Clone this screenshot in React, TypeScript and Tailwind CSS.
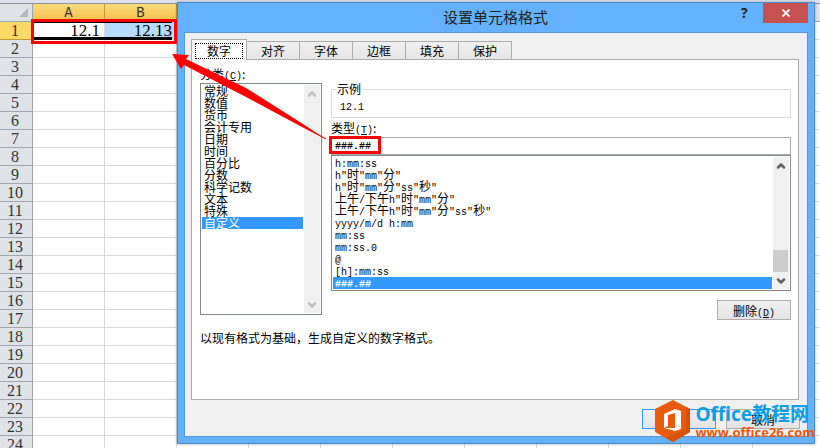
import { Fragment } from "react";
import { ChevronDown, ChevronUp } from "lucide-react";
import clsx from "clsx";

const COLUMNS = ["A", "B", "C", "D", "E", "F", "G", "H", "I", "J", "K"];
const ROWS = Array.from({ length: 24 }, (_, i) => i + 1);
const VALUES: Record<string, string> = { A1: "12.1", B1: "12.13" };

const TABS = ["数字", "对齐", "字体", "边框", "填充", "保护"];

const CATEGORIES = [
  "常规",
  "数值",
  "货币",
  "会计专用",
  "日期",
  "时间",
  "百分比",
  "分数",
  "科学记数",
  "文本",
  "特殊",
  "自定义",
];

const FORMATS = [
  "h:mm:ss",
  'h"时"mm"分"',
  'h"时"mm"分"ss"秒"',
  '上午/下午h"时"mm"分"',
  '上午/下午h"时"mm"分"ss"秒"',
  "yyyy/m/d h:mm",
  "mm:ss",
  "mm:ss.0",
  "@",
  "[h]:mm:ss",
  "###.##",
];

// Latin runs are half the width of a Chinese character
function MixedText({ text }: { text: string }) {
  return (
    <>
      {text.split(/([\x20-\x7e]+)/).map((part, i) =>
        i % 2 === 1 ? (
          <span key={i} className="font-['Liberation_Mono',monospace] text-[10px]">
            {part}
          </span>
        ) : (
          <Fragment key={i}>{part}</Fragment>
        )
      )}
    </>
  );
}

function AccessKey({ letter }: { letter: string }) {
  return (
    <span className="font-['Liberation_Mono',monospace] text-[10px]">
      (<u>{letter}</u>)
    </span>
  );
}

function Sheet() {
  return (
    <table className="w-[825px] table-fixed border-separate border-spacing-0 border-t border-[#8f9299] bg-white text-[#333]">
      <colgroup>
        <col className="w-[33px]" />
        {COLUMNS.map((c) => (
          <col key={c} className="w-[72px]" />
        ))}
      </colgroup>
      <thead>
        <tr className="h-[18px]">
          <th className="border-r border-b border-[#9ea6b0] bg-[#dfe3e8] p-0">
            <svg viewBox="0 0 9 9" className="mr-1 ml-auto block size-[9px]">
              <path d="M9 0V9H0Z" fill="#b4b9c0" />
            </svg>
          </th>
          {COLUMNS.map((c, i) => (
            <th
              key={c}
              className={clsx(
                "border-r border-b p-0 pt-0.5 font-['Liberation_Mono',monospace] text-sm leading-[15px] font-normal",
                i < 2
                  ? "border-[#c29a3c] bg-linear-to-b from-[#fada7c] to-[#f2bf48]"
                  : "border-[#9ea6b0] bg-[#dfe3e8]"
              )}
            >
              {c}
            </th>
          ))}
        </tr>
      </thead>
      <tbody>
        {ROWS.map((r) => (
          <tr key={r} className="h-[18px]">
            <th
              className={clsx(
                "border-r border-b p-0 pr-0.5 font-['Liberation_Serif',serif] text-base leading-4 font-normal",
                r === 1
                  ? "border-[#c29a3c] bg-[#ffd865]"
                  : "border-[#9ea6b0] bg-[#dfe3e8]"
              )}
            >
              {r}
            </th>
            {COLUMNS.map((c) => (
              <td
                key={c}
                className={clsx(
                  "border-r border-b border-[#d8d9db] p-0 pt-px pr-1 text-right font-['Liberation_Serif',serif] text-[17px] leading-4 text-black",
                  c + r === "B1" && "bg-[#b7dbff]"
                )}
              >
                {VALUES[c + r]}
              </td>
            ))}
          </tr>
        ))}
      </tbody>
    </table>
  );
}

interface ListBoxProps {
  label: string;
  items: string[];
  selected: string;
  disabledScroll?: boolean;
  className?: string;
}

function ListBox({ label, items, selected, disabledScroll, className }: ListBoxProps) {
  return (
    <div className={clsx("flex border border-[#828790] bg-white p-px", className)}>
      <ul role="listbox" aria-label={label} className="min-w-0 flex-1">
        {items.map((item) => (
          <li
            key={item}
            role="option"
            aria-selected={item === selected}
            className={clsx(
              "flex h-3 items-center pl-0.5 leading-3 whitespace-pre",
              item === selected && "bg-[#3399ff] text-white",
              item.startsWith("#") && "font-bold"
            )}
          >
            <span>
              <MixedText text={item} />
            </span>
          </li>
        ))}
      </ul>
      <div
        className={clsx(
          "ml-px flex w-4 flex-col items-center bg-[#f0f0f0]",
          disabledScroll ? "text-[#bfbfbf]" : "text-[#606060]"
        )}
      >
        <button type="button" aria-label="Scroll up" className="flex h-[17px] items-center">
          <ChevronUp className="size-3" strokeWidth={5} />
        </button>
        <div className="flex w-full flex-1 flex-col justify-end">
          {!disabledScroll && <div className="mr-px h-[22px] bg-[#cdcdcd]" />}
        </div>
        <button type="button" aria-label="Scroll down" className="flex h-[17px] items-center">
          <ChevronDown className="size-3" strokeWidth={5} />
        </button>
      </div>
    </div>
  );
}

const BUTTON =
  "h-5 w-[74px] border bg-linear-to-b from-[#f0f0f0] to-[#e4e4e4] pt-0.5 leading-4";

function FormatDialog() {
  return (
    <div
      role="dialog"
      aria-label="设置单元格格式"
      className="absolute top-[2px] right-[5px] left-[177px] border border-[#4a8ac9] bg-[#64b2ff] px-[6px] pb-[6px] shadow-[0_0_3px_rgba(0,0,0,0.3)]"
    >
      <div className="flex h-[29px] items-start">
        <h1 className="min-w-0 flex-1 pt-0.5 pl-20 text-center text-[15px] leading-6 text-[#222]">
          设置单元格格式
        </h1>
        <button
          type="button"
          aria-label="Help"
          className="w-9 pt-0.5 pl-3.5 text-left font-['Open_Sans',sans-serif] text-sm leading-4 font-bold text-[#222]"
        >
          ?
        </button>
        <button
          type="button"
          aria-label="Close"
          className="flex h-5 w-[45px] items-center justify-center bg-[#c75050]"
        >
          <svg viewBox="0 0 8 8" className="size-2 stroke-white" strokeWidth="1.8">
            <path d="M0.5 0.5 7.5 7.5M7.5 0.5 0.5 7.5" />
          </svg>
        </button>
      </div>

      <div className="border border-[#5597d8] bg-[#f0f0f0] pt-[6px] pr-2 pb-[7px] pl-[6px]">
        <div role="tablist" className="flex items-end">
          {TABS.map((tab, i) => (
            <button
              key={tab}
              type="button"
              role="tab"
              aria-selected={i === 0}
              className={clsx(
                "border-[#acacac]",
                i === 0
                  ? "relative -mb-px h-[21px] w-14 border border-b-0 bg-white p-[3px] pb-0.5"
                  : "h-[18px] w-[53px] border-t border-r bg-linear-to-b from-[#f0f0f0] to-[#e5e5e5] leading-4"
              )}
            >
              {i === 0 ? (
                <span className="block border border-dotted border-black leading-[14px]">
                  {tab}
                </span>
              ) : (
                tab
              )}
            </button>
          ))}
        </div>

        <div role="tabpanel" className="h-[341px] border border-[#acacac] bg-white pt-1.5 pr-[7px] pl-2">
          <div className="flex gap-[9px]">
            <div className="w-[122px]">
              <div className="h-[17px] leading-4">
                分类
                <AccessKey letter="C" />:
              </div>
              <ListBox
                label="分类"
                items={CATEGORIES}
                selected="自定义"
                disabledScroll
                className="h-[232px]"
              />
            </div>

            <div className="min-w-0 flex-1 pt-4">
              <fieldset className="h-[36px] border border-[#dcdcdc] pl-2">
                <legend className="-ml-1 px-px leading-[14px]">示例</legend>
                <div className="pt-px">
                  <MixedText text="12.1" />
                </div>
              </fieldset>
              <label htmlFor="format" className="block h-[19px] pt-0.5 leading-4">
                类型
                <AccessKey letter="T" />:
              </label>
              <input
                id="format"
                defaultValue="###.##"
                className="block h-[18px] w-full border border-[#acacac] bg-white pl-[3px] font-['Liberation_Mono',monospace] text-[10px] font-bold outline-none"
              />
              <ListBox label="类型" items={FORMATS} selected="###.##" className="h-[136px]" />
              <div className="mt-[9px] flex justify-end">
                <button type="button" className={clsx(BUTTON, "border-[#acacac]")}>
                  删除
                  <AccessKey letter="D" />
                </button>
              </div>
            </div>
          </div>
          <p className="mt-2.5 leading-4">以现有格式为基础，生成自定义的数字格式。</p>
        </div>

        <div className="-mr-px mt-[9px] flex justify-end gap-2.5">
          <button type="button" aria-label="确定" className={clsx(BUTTON, "border-[#3399ff]")} />
          <button type="button" className={clsx(BUTTON, "border-[#acacac]")}>
            取消
          </button>
        </div>
      </div>
    </div>
  );
}

function Watermark() {
  return (
    <div className="absolute top-[400px] right-[5px] flex items-start gap-1">
      <svg viewBox="0 0 36 42" className="h-[42px] w-9">
        <path d="M18 0 35 9V32L18 42 0 32V9Z" fill="#eb5a0c" />
        <path d="M31 7 35 9V32L18 42 11 38 31 29Z" fill="#d9500b" />
        <path d="M9 14 20 9 26 11V29L20 31 9 28 20 28V13L13 15V26L9 28Z" fill="#fff" />
      </svg>
      <div className="pt-1">
        <div className="font-['Open_Sans','Noto_Sans_CJK_SC',sans-serif] text-[19px] leading-5 font-bold whitespace-nowrap text-[#0c9fe8]">
          Office教程网
        </div>
        <div className="font-['Open_Sans',sans-serif] text-[13px] leading-4 font-bold text-[#eb5a0c]">
          www.office26.com
        </div>
      </div>
    </div>
  );
}

export default function App() {
  return (
    <main className="relative h-screen overflow-hidden bg-[#dfe1ee] pt-[3px] font-['Noto_Sans_CJK_SC',sans-serif] text-xs text-black">
      <Sheet />
      <FormatDialog />

      {/* callouts */}
      <div className="absolute top-[19px] left-[31px] h-[25px] w-[146px] border-3 border-[#f00]">
        <div className="mr-0.5 h-[18px] border-t border-b-3 border-black" />
      </div>
      <div className="absolute top-[136px] left-[329px] h-[18px] w-[52px] border-3 border-[#f00]" />
      <svg viewBox="0 0 156 88" className="absolute top-[53px] left-[171px] h-[88px] w-[156px]">
        <path d="M1 1 18 2 15 6 75 35 132 71 156 87 131 74 75 44 13 12 10 16Z" fill="#f00" />
        <path d="M130 72 155 86" stroke="#f00" strokeWidth="1" />
      </svg>

      <Watermark />
    </main>
  );
}
